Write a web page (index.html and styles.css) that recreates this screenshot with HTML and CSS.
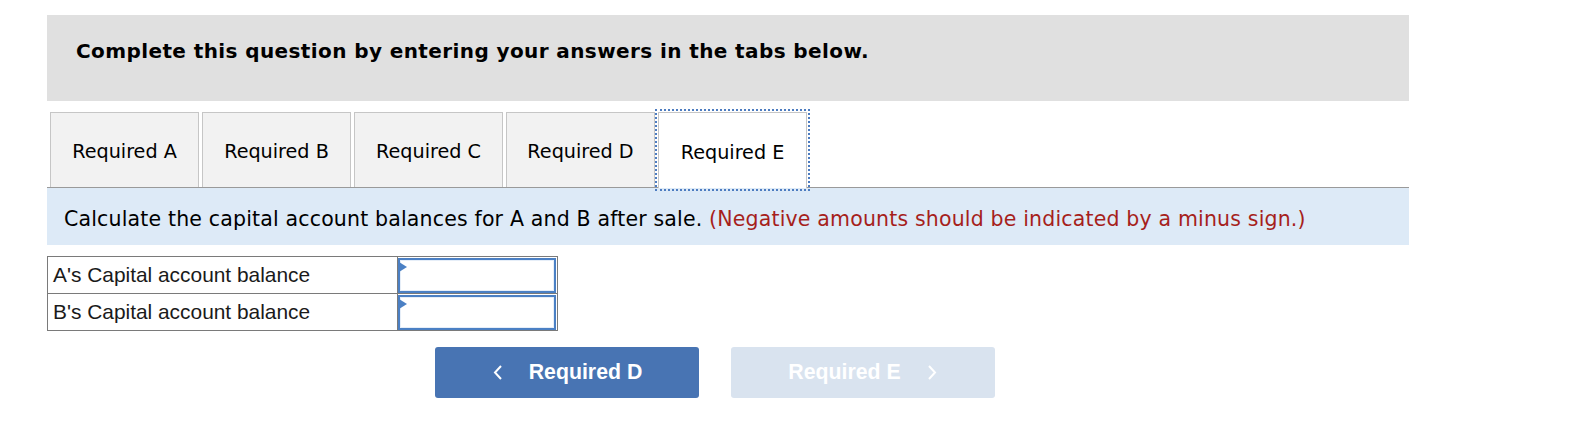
FILE: index.html
```html
<!DOCTYPE html>
<html>
<head>
<meta charset="utf-8">
<link rel="stylesheet" href="styles.css">
</head>
<body>
<div class="page">
  <div class="header">Complete this question by entering your answers in the tabs below.</div>
  <div class="tabs">
    <div class="tab">Required A</div>
    <div class="tab">Required B</div>
    <div class="tab">Required C</div>
    <div class="tab">Required D</div>
    <div class="tab active">Required E</div>
  </div>
  <div class="instructions">Calculate the capital account balances for A and B after sale. <span class="note">(Negative amounts should be indicated by a minus sign.)</span></div>
  <table class="answers">
    <tr>
      <td class="label">A's Capital account balance</td>
      <td class="cell"><div class="input"><span class="flag"></span></div></td>
    </tr>
    <tr>
      <td class="label">B's Capital account balance</td>
      <td class="cell"><div class="input"><span class="flag"></span></div></td>
    </tr>
  </table>
  <div class="nav">
    <div class="btn prev">
      <svg class="chev" width="11" height="15" viewBox="0 0 11 15"><polyline points="9,1 3,7.5 9,14" fill="none" stroke="#fff" stroke-width="2"/></svg>
      <span>Required D</span>
    </div>
    <div class="btn next disabled">
      <span>Required E</span>
      <svg class="chev" width="11" height="15" viewBox="0 0 11 15"><polyline points="2,1 8,7.5 2,14" fill="none" stroke="#fff" stroke-width="2"/></svg>
    </div>
  </div>
</div>
</body>
</html>
```
FILE: styles.css
```css
html, body {
  margin: 0;
  padding: 0;
  background: #ffffff;
}
.page {
  width: 1362px;
  margin-left: 47px;
  padding-top: 15px;
  font-family: "DejaVu Sans", Verdana, sans-serif;
  color: #000;
}
.header {
  box-sizing: border-box;
  height: 86px;
  background: #e0e0e0;
  padding: 27px 0 0 29px;
  font-weight: bold;
  font-size: 20px;
  letter-spacing: 0.4px;
  line-height: 19px;
}
.tabs {
  display: flex;
  margin-top: 11px;
  border-bottom: 1px solid #9a9a9a;
  height: 75px;
}
.tab {
  box-sizing: border-box;
  width: 149px;
  height: 75px;
  margin-left: 3px;
  background: #f2f2f2;
  border: 1px solid #c6c6c6;
  border-bottom: none;
  display: flex;
  align-items: center;
  justify-content: center;
  padding-top: 3px;
  font-size: 19.2px;
}
.tab.active {
  background: #ffffff;
  height: 76px;
  margin-left: 3px;
  outline: 2px dotted #4d7cc0;
  outline-offset: 1px;
  position: relative;
  z-index: 1;
}
.instructions {
  box-sizing: border-box;
  height: 57px;
  background: #ddeaf7;
  padding: 20px 0 0 17px;
  font-size: 20.5px;
  letter-spacing: 0.17px;
  line-height: 22px;
}
.note {
  color: #a61f1c;
}
.answers {
  margin-top: 11px;
  border-collapse: collapse;
  font-family: "Liberation Sans", Arial, sans-serif;
  font-size: 20.9px;
}
.answers td {
  border: 1px solid #7a7a7a;
  padding: 0;
  height: 36px;
}
.answers .label {
  width: 344px;
  padding-left: 5px;
  color: #1a1a1a;
}
.answers .cell {
  width: 159px;
}
.input {
  position: relative;
  box-sizing: border-box;
  height: 35px;
  margin: 0 1px 0 0;
  border: 2px solid #4b80c4;
  box-shadow: inset 0 0 0 1px #e6eef8;
  background: #fff;
}
.flag {
  position: absolute;
  left: -1px;
  top: 2px;
  width: 0;
  height: 0;
  border-top: 5px solid transparent;
  border-bottom: 5px solid transparent;
  border-left: 8px solid #4b80c4;
}
.nav {
  display: flex;
  gap: 32px;
  margin-top: 16px;
  padding-left: 388px;
}
.btn {
  box-sizing: border-box;
  width: 264px;
  height: 51px;
  border-radius: 3px;
  display: flex;
  align-items: center;
  justify-content: center;
  gap: 26px;
  font-family: "Liberation Sans", Arial, sans-serif;
  font-weight: bold;
  font-size: 21.3px;
  color: #fff;
}
.btn.prev {
  background: #4874b3;
}
.btn.disabled {
  background: #d9e3ef;
}
.chev {
  display: block;
}
```
